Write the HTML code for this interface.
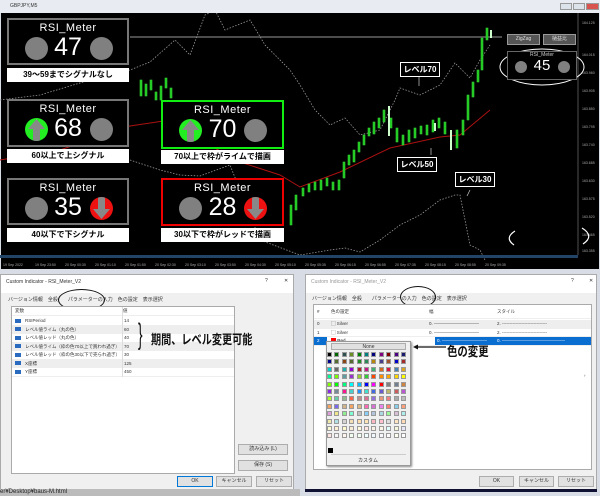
<!DOCTYPE html>
<html><head><meta charset="utf-8"><style>
*{margin:0;padding:0;box-sizing:border-box}
body{width:600px;height:496px;overflow:hidden;background:#d8dce4;font-family:"Liberation Sans","Noto Sans CJK JP",sans-serif;position:relative}
.a{position:absolute}
.panel{position:absolute;background:#000;border:2px solid #777;color:#fff;text-align:center}
.panel .t{font-size:11px;line-height:12px;margin-top:2px;letter-spacing:.5px}
.panel .n{position:absolute;left:0;right:0;top:14px;font-size:25px;line-height:26px}
.c{position:absolute;width:23px;height:23px;border-radius:50%;background:#808080;top:17px;overflow:hidden}
.c svg{position:absolute;left:0;top:0}
.lab{position:absolute;background:#fff;color:#000;font-size:8px;font-weight:bold;text-align:center;line-height:14px;height:14px}
.lv{position:absolute;border:1px solid #fff;background:#000;color:#fff;font-size:8px;font-weight:bold;text-align:center;line-height:13px;height:15px;width:40px}
.dlg{position:absolute;background:#f0f0f0;border:1px solid #aaa;font-size:5px;color:#333}
.btn{position:absolute;background:#e1e1e1;border:1px solid #adadad;font-size:5px;text-align:center;line-height:9px;height:11px}
.row{position:absolute;left:0;right:0;height:8.5px;font-size:4.5px;line-height:8.5px;border-bottom:1px solid #eee;white-space:nowrap;overflow:hidden}
.ic{display:inline-block;width:6px;height:4px;background:#2a6bc0;margin:0 4px 0 3px;vertical-align:middle}
.grid{position:absolute;left:327px;top:352px;display:grid;grid-template-columns:repeat(11,5px);grid-auto-rows:5px;gap:2.4px}
.grid div{border:.5px solid #999}
</style></head><body>
<div class="a" style="left:0;top:0;width:600px;height:13px;background:#e8ecf2;font-size:5px;line-height:13px;padding-left:10px;color:#333">GBPJPY,M5</div>
<div class="a" style="left:560px;top:3px;width:12px;height:7px;background:#dde3ea;border:1px solid #999"></div>
<div class="a" style="left:573px;top:3px;width:12px;height:7px;background:#dde3ea;border:1px solid #999"></div>
<div class="a" style="left:586px;top:3px;width:13px;height:7px;background:#d9534f;border:1px solid #999"></div>
<div class="a" style="left:1px;top:13px;width:598px;height:256px;background:#000"></div>
<svg class="a" style="left:0;top:13px" width="600" height="256" viewBox="0 13 600 256">
<line x1="130" y1="37" x2="502" y2="37" stroke="#666" stroke-width="1.5"/>
<polyline fill="none" stroke="#999" stroke-dasharray="1.5,1.5" stroke-width=".8" points="0,100 40,95 90,80 130,70 150,62 175,40 190,55 205,15 215,10 225,30 250,20 265,45 290,70 300,85 315,110 330,125 345,118 360,135 380,130 395,100 400,88 420,95 440,85 455,63 470,78 480,60 490,45"/>
<polyline fill="none" stroke="#999" stroke-dasharray="1.5,1.5" stroke-width=".8" points="130,160 160,170 180,175 200,176 230,165 260,240 300,255 330,250 345,248 360,252 380,240 400,225 420,215 440,200 455,195 460,195 470,245 480,250 485,260"/>
<polyline fill="none" stroke="#a11" stroke-width="1" points="0,160 60,150 130,126 170,120 200,140 240,162 280,175 300,187 340,172 390,148 440,137 460,135 490,110"/>
<g fill="#2c2" stroke="#3c3" stroke-width=".6">
<rect x="140" y="80" width="2" height="16"/><rect x="145" y="84" width="2" height="12"/><rect x="150" y="80" width="2" height="10"/><rect x="155" y="92" width="2" height="8"/><rect x="160" y="86" width="2" height="14"/><rect x="165" y="78" width="2" height="10"/><rect x="170" y="88" width="2" height="10"/>
<rect x="290" y="205" width="2" height="20"/><rect x="295" y="195" width="2" height="15"/>
<rect x="302" y="188" width="2" height="8"/><rect x="308" y="184" width="2" height="8"/><rect x="314" y="182" width="2" height="8"/><rect x="320" y="180" width="2" height="10"/><rect x="326" y="178" width="2" height="8"/><rect x="332" y="182" width="2" height="8"/><rect x="338" y="180" width="2" height="10"/><rect x="343" y="162" width="2" height="16"/><rect x="348" y="155" width="2" height="10"/><rect x="353" y="150" width="2" height="12"/><rect x="358" y="142" width="2" height="10"/><rect x="363" y="135" width="2" height="10"/><rect x="368" y="128" width="2" height="8"/><rect x="373" y="122" width="2" height="12"/><rect x="378" y="118" width="2" height="10"/><rect x="383" y="110" width="2" height="12"/><rect x="390" y="118" width="2" height="10"/><rect x="396" y="128" width="2" height="14"/><rect x="402" y="135" width="2" height="10"/><rect x="408" y="130" width="2" height="12"/><rect x="414" y="128" width="2" height="10"/><rect x="420" y="126" width="2" height="8"/><rect x="426" y="125" width="2" height="10"/><rect x="432" y="120" width="2" height="12"/><rect x="438" y="118" width="2" height="10"/><rect x="444" y="122" width="2" height="12"/><rect x="456" y="130" width="2" height="18"/><rect x="462" y="120" width="2" height="15"/><rect x="467" y="95" width="2" height="25"/><rect x="472" y="82" width="2" height="15"/><rect x="477" y="70" width="2" height="12"/><rect x="481" y="38" width="2" height="32"/><rect x="486" y="28" width="2" height="12"/></g>
<g fill="#cfc"><rect x="88" y="185" width="2" height="8"/><rect x="434" y="123" width="2" height="8"/><rect x="450" y="130" width="2" height="20"/><rect x="388" y="106" width="2" height="30"/><rect x="490" y="30" width="2" height="8"/></g>
<line x1="578" y1="13" x2="578" y2="255" stroke="#888" stroke-width=".6"/>
<g fill="#aaa" font-size="3.5">
<text x="582" y="24">164.125</text><text x="582" y="56">164.015</text><text x="582" y="74">163.960</text><text x="582" y="92">163.905</text><text x="582" y="110">163.850</text><text x="582" y="128">163.795</text><text x="582" y="146">163.740</text><text x="582" y="164">163.685</text><text x="582" y="182">163.630</text><text x="582" y="200">163.575</text><text x="582" y="218">163.520</text><text x="582" y="236">163.465</text><text x="582" y="252">163.355</text></g>
<rect x="0" y="255" width="578" height="3" fill="#246"/>
<g fill="#aaa" font-size="3.5">
<text x="3" y="266">19 Sep 2022</text><text x="35" y="266">19 Sep 23:50</text><text x="65" y="266">20 Sep 00:30</text><text x="95" y="266">20 Sep 01:10</text><text x="125" y="266">20 Sep 01:50</text><text x="155" y="266">20 Sep 02:30</text><text x="185" y="266">20 Sep 03:10</text><text x="215" y="266">20 Sep 03:50</text><text x="245" y="266">20 Sep 04:30</text><text x="275" y="266">20 Sep 05:10</text><text x="305" y="266">20 Sep 05:35</text><text x="335" y="266">20 Sep 06:15</text><text x="365" y="266">20 Sep 06:55</text><text x="395" y="266">20 Sep 07:35</text><text x="425" y="266">20 Sep 08:15</text><text x="455" y="266">20 Sep 08:55</text><text x="485" y="266">20 Sep 09:35</text></g>
<ellipse cx="542" cy="67" rx="42" ry="18" fill="none" stroke="#fff" stroke-width="1"/>
<path d="M515 231 Q504 238 514 245" fill="none" stroke="#fff" stroke-width="1.2"/>
<path d="M582 228 Q595 236 583 244" fill="none" stroke="#fff" stroke-width="1.2"/>
<line x1="419" y1="77" x2="419" y2="86" stroke="#ccc" stroke-width=".7"/>
<line x1="431" y1="148" x2="431" y2="155" stroke="#ccc" stroke-width=".7"/>
<line x1="470" y1="190" x2="467" y2="196" stroke="#ccc" stroke-width=".7"/>
</svg>
<div class="panel" style="left:7px;top:18px;width:122px;height:47px"><div class="t">RSI_Meter</div><div class="c" style="left:16px"></div><div class="n">47</div><div class="c" style="left:81px"></div></div>
<div class="lab" style="left:7px;top:68px;width:122px">39～59までシグナルなし</div>
<div class="panel" style="left:7px;top:99px;width:122px;height:48px"><div class="t">RSI_Meter</div><div class="c" style="left:16px;background:#2e2"><svg width="23" height="23"><path d="M11.5 1 L20 11 H15 V23 H8 V11 H3 Z" fill="#888"/></svg></div><div class="n">68</div><div class="c" style="left:81px"></div></div>
<div class="lab" style="left:7px;top:149px;width:122px">60以上で上シグナル</div>
<div class="panel" style="left:7px;top:178px;width:122px;height:47px"><div class="t">RSI_Meter</div><div class="c" style="left:16px"></div><div class="n">35</div><div class="c" style="left:81px;background:#e11"><svg width="23" height="23"><path d="M11.5 22 L20 12 H15 V0 H8 V12 H3 Z" fill="#888"/></svg></div></div>
<div class="lab" style="left:7px;top:228px;width:122px">40以下で下シグナル</div>
<div class="panel" style="left:161px;top:100px;width:123px;height:49px;border-color:#1e1"><div class="t">RSI_Meter</div><div class="c" style="left:16px;background:#2e2"><svg width="23" height="23"><path d="M11.5 1 L20 11 H15 V23 H8 V11 H3 Z" fill="#888"/></svg></div><div class="n">70</div><div class="c" style="left:81px"></div></div>
<div class="lab" style="left:161px;top:150px;width:123px">70以上で枠がライムで描画</div>
<div class="panel" style="left:161px;top:178px;width:123px;height:48px;border-color:#e00"><div class="t">RSI_Meter</div><div class="c" style="left:16px"></div><div class="n">28</div><div class="c" style="left:81px;background:#e11"><svg width="23" height="23"><path d="M11.5 22 L20 12 H15 V0 H8 V12 H3 Z" fill="#888"/></svg></div></div>
<div class="lab" style="left:161px;top:228px;width:123px">30以下で枠がレッドで描画</div>
<div class="btn" style="left:507px;top:34px;width:33px;height:11px;background:#555;color:#ddd;border-color:#999">ZigZag</div>
<div class="btn" style="left:543px;top:34px;width:33px;height:11px;background:#555;color:#ddd;border-color:#999">樋益比</div>
<div class="panel" style="left:507px;top:51px;width:70px;height:29px;border:1px solid #666"><div style="font-size:5px;line-height:6px;color:#ccc">RSI_Meter</div><div class="c" style="width:12px;height:12px;left:7px;top:9px"></div><div style="font-size:15px;line-height:16px">45</div><div class="c" style="width:12px;height:12px;left:50px;top:9px"></div></div>
<div class="lv" style="left:400px;top:62px">レベル70</div>
<div class="lv" style="left:397px;top:157px">レベル50</div>
<div class="lv" style="left:455px;top:172px">レベル30</div>
<div class="dlg" style="left:0;top:274px;width:294px;height:215px;background:#fff">
<div class="a" style="left:5px;top:4px">Custom Indicator - RSI_Meter_V2</div><div class="a" style="left:264px;top:3px">?</div><div class="a" style="left:283px;top:3px">✕</div>
<div class="a" style="left:0;top:18px;width:292px;height:196px;background:#f0f0f0"></div>
<div class="a" style="left:7px;top:21px">バージョン情報　全般　　パラメーターの入力　色の設定　表示選択</div>
<div class="a" style="left:57px;top:14px;width:47px;height:22px;border:1.3px solid #111;border-radius:50%"></div>
<div class="a" style="left:10px;top:31px;width:224px;height:168px;background:#fff;border:1px solid #aaa">
<div class="row" style="top:0"><span style="margin-left:3px">変数</span><span class="a" style="left:111px">値</span></div>
<div class="row" style="top:10px"><span class="ic"></span>RSIPeriod<span class="a" style="left:112px">14</span></div>
<div class="row" style="top:18.5px;background:#eee"><span class="ic"></span>レベル値ライム（丸の色）<span class="a" style="left:112px">60</span></div>
<div class="row" style="top:27px"><span class="ic"></span>レベル値レッド（丸の色）<span class="a" style="left:112px">40</span></div>
<div class="row" style="top:35.5px;background:#eee"><span class="ic"></span>レベル値ライム（枠の色70以上で買われ過ぎ）<span class="a" style="left:112px">70</span></div>
<div class="row" style="top:44px"><span class="ic"></span>レベル値レッド（枠の色30以下で売られ過ぎ）<span class="a" style="left:112px">30</span></div>
<div class="row" style="top:52.5px;background:#eee"><span class="ic"></span>X座標<span class="a" style="left:112px">125</span></div>
<div class="row" style="top:61px"><span class="ic"></span>Y座標<span class="a" style="left:112px">450</span></div>
<div class="a" style="left:110px;top:0;width:1px;height:70px;background:#ddd"></div>
</div>
<div class="a" style="left:137px;top:45px;font-size:30px;line-height:30px;color:#111;transform:scaleX(.45);transform-origin:left">}</div>
<div class="a" style="left:150px;top:54px;font-size:13px;font-weight:bold;color:#111;white-space:nowrap;transform:scaleX(.78);transform-origin:left">期間、レベル変更可能</div>
<div class="btn" style="left:237px;top:169px;width:50px">読み込み (L)</div>
<div class="btn" style="left:237px;top:185px;width:50px">保存 (S)</div>
<div class="btn" style="left:176px;top:201px;width:36px;border-color:#0078d7">OK</div>
<div class="btn" style="left:215px;top:201px;width:36px">キャンセル</div>
<div class="btn" style="left:255px;top:201px;width:36px">リセット</div>
</div>
<div class="dlg" style="left:305px;top:274px;width:292px;height:215px;background:#fff">
<div class="a" style="left:5px;top:4px;color:#999">Custom Indicator - RSI_Meter_V2</div><div class="a" style="left:265px;top:3px">?</div><div class="a" style="left:283px;top:3px">✕</div>
<div class="a" style="left:0;top:18px;width:290px;height:196px;background:#f0f0f0"></div>
<div class="a" style="left:6px;top:20px">バージョン情報　全般　　パラメーターの入力　色の設定　表示選択</div>
<div class="a" style="left:94px;top:11px;width:36px;height:22px;border:1.3px solid #111;border-radius:50%"></div>
<div class="a" style="left:7px;top:29px;width:279px;height:166px;background:#fff;border:1px solid #aaa;font-size:4.5px">
<div class="row" style="top:0;height:14px;line-height:14px"><span style="margin-left:3px">#</span><span class="a" style="left:17px">色の設定</span><span class="a" style="left:115px">幅</span><span class="a" style="left:183px">スタイル</span></div>
<div class="row" style="top:15px;background:#eee"><span style="margin-left:3px">0</span><span class="a" style="left:17px">▢ Silver</span><span class="a" style="left:115px">0. ——————————</span><span class="a" style="left:183px">2. ------------------------------</span></div>
<div class="row" style="top:23.5px"><span style="margin-left:3px">1</span><span class="a" style="left:17px">▢ Silver</span><span class="a" style="left:115px">0. ——————————</span><span class="a" style="left:183px">2. ------------------------------</span></div>
<div class="row" style="top:32px;background:#0a6ed1;color:#fff"><span style="margin-left:3px">2</span><span class="a" style="left:13px;width:108px;background:#fff;color:#000;padding-left:4px"><span style="display:inline-block;width:5px;height:5px;background:#f00;vertical-align:middle"></span> Red</span><span class="a" style="left:123px">0. ——————————</span><span class="a" style="left:183px">0. ——————————————</span></div>
<div class="a" style="left:270px;top:68px">›</div>
</div>
<div class="a" style="left:20px;top:66px;width:85px;height:125px;background:#f0f0f0;border:1px solid #999;box-shadow:1px 1px 2px #888"></div>
<div class="btn" style="left:25px;top:68px;width:75px;height:7px;line-height:6px">None</div>
<div class="a" style="left:25px;top:179px;width:75px;height:1px;background:#ccc"></div>
<div class="a" style="left:52px;top:182px">カスタム</div>
<div class="a" style="left:22px;top:173px;width:5px;height:5px;background:#000"></div>
<div class="btn" style="left:173px;top:201px;width:35px">OK</div>
<div class="btn" style="left:213px;top:201px;width:35px">キャンセル</div>
<div class="btn" style="left:252px;top:201px;width:36px">リセット</div>
</div>
<div class="grid">
<div style="background:#000"></div><div style="background:#060"></div><div style="background:#2f4f4f"></div><div style="background:#6b8e23"></div><div style="background:#008000"></div><div style="background:#008080"></div><div style="background:#000080"></div><div style="background:#800080"></div><div style="background:#800000"></div><div style="background:#4b0082"></div><div style="background:#191970"></div>
<div style="background:#00008b"></div><div style="background:#556b2f"></div><div style="background:#8b4513"></div><div style="background:#556b2f"></div><div style="background:#228b22"></div><div style="background:#2e8b57"></div><div style="background:#b8860b"></div><div style="background:#483d8b"></div><div style="background:#a0522d"></div><div style="background:#0000cd"></div><div style="background:#a52a2a"></div>
<div style="background:#00ced1"></div><div style="background:#696969"></div><div style="background:#20b2aa"></div><div style="background:#9400d3"></div><div style="background:#b22222"></div><div style="background:#c71585"></div><div style="background:#3cb371"></div><div style="background:#d2691e"></div><div style="background:#dc143c"></div><div style="background:#4682b4"></div><div style="background:#daa520"></div>
<div style="background:#00fa9a"></div><div style="background:#7cfc00"></div><div style="background:#5f9ea0"></div><div style="background:#9932cc"></div><div style="background:#9acd32"></div><div style="background:#32cd32"></div><div style="background:#ff4500"></div><div style="background:#ff8c00"></div><div style="background:#ffa500"></div><div style="background:#ffd700"></div><div style="background:#ffff00"></div>
<div style="background:#7fff00"></div><div style="background:#00ff00"></div><div style="background:#00ff7f"></div><div style="background:#00ffff"></div><div style="background:#00bfff"></div><div style="background:#0000ff"></div><div style="background:#ff00ff"></div><div style="background:#ff0000"></div><div style="background:#808080"></div><div style="background:#708090"></div><div style="background:#cd853f"></div>
<div style="background:#8a2be2"></div><div style="background:#778899"></div><div style="background:#ff1493"></div><div style="background:#48d1cc"></div><div style="background:#1e90ff"></div><div style="background:#40e0d0"></div><div style="background:#4169e1"></div><div style="background:#6a5acd"></div><div style="background:#bdb76b"></div><div style="background:#cd5c5c"></div><div style="background:#ba55d3"></div>
<div style="background:#adff2f"></div><div style="background:#66cdaa"></div><div style="background:#8fbc8f"></div><div style="background:#ff6347"></div><div style="background:#bc8f8f"></div><div style="background:#db7093"></div><div style="background:#9370db"></div><div style="background:#e9967a"></div><div style="background:#f08080"></div><div style="background:#a9a9a9"></div><div style="background:#bbb"></div>
<div style="background:#f4a460"></div><div style="background:#7b68ee"></div><div style="background:#d2b48c"></div><div style="background:#f4a460"></div><div style="background:#deb887"></div><div style="background:#ff69b4"></div><div style="background:#da70d6"></div><div style="background:#ee82ee"></div><div style="background:#fa8072"></div><div style="background:#87ceeb"></div><div style="background:#ffa07a"></div>
<div style="background:#dda0dd"></div><div style="background:#f0e68c"></div><div style="background:#90ee90"></div><div style="background:#7fffd4"></div><div style="background:#c0c0c0"></div><div style="background:#87cefa"></div><div style="background:#b0c4de"></div><div style="background:#add8e6"></div><div style="background:#98fb98"></div><div style="background:#d8bfd8"></div><div style="background:#afeeee"></div>
<div style="background:#eee8aa"></div><div style="background:#b0e0e6"></div><div style="background:#d3d3d3"></div><div style="background:#f5deb3"></div><div style="background:#ffdead"></div><div style="background:#ffe4b5"></div><div style="background:#ffb6c1"></div><div style="background:#ffc0cb"></div><div style="background:#dcdcdc"></div><div style="background:#ffe4c4"></div><div style="background:#ffdab9"></div>
<div style="background:#fafad2"></div><div style="background:#ffefd5"></div><div style="background:#fffacd"></div><div style="background:#faebd7"></div><div style="background:#fff8dc"></div><div style="background:#ffe4e1"></div><div style="background:#faf0e6"></div><div style="background:#fdf5e6"></div><div style="background:#e0ffff"></div><div style="background:#f5f5dc"></div><div style="background:#e6e6fa"></div>
<div style="background:#ffe4e1"></div><div style="background:#f5f5f5"></div><div style="background:#fff5ee"></div><div style="background:#f0fff0"></div><div style="background:#f0fff0"></div><div style="background:#f0ffff"></div><div style="background:#f0f8ff"></div><div style="background:#f8f8ff"></div><div style="background:#fffafa"></div><div style="background:#fffff0"></div><div style="background:#fff"></div>
</div>
<svg class="a" style="left:410px;top:340px" width="40" height="14"><line x1="6" y1="7" x2="36" y2="7" stroke="#111" stroke-width="1.2"/><path d="M3 7 l5 -2.5 v5z" fill="#111"/></svg>
<div class="a" style="left:447px;top:341px;font-size:13px;font-weight:bold;color:#111;transform:scaleX(.8);transform-origin:left;white-space:nowrap">色の変更</div>
<div class="a" style="left:0;top:489px;width:300px;height:7px;background:#bbb;font-size:6px;line-height:7px;color:#222">er¥Desktop¥baus-M.html</div>
<div class="a" style="left:305px;top:489px;width:292px;height:3px;background:#113"></div>
</body></html>
